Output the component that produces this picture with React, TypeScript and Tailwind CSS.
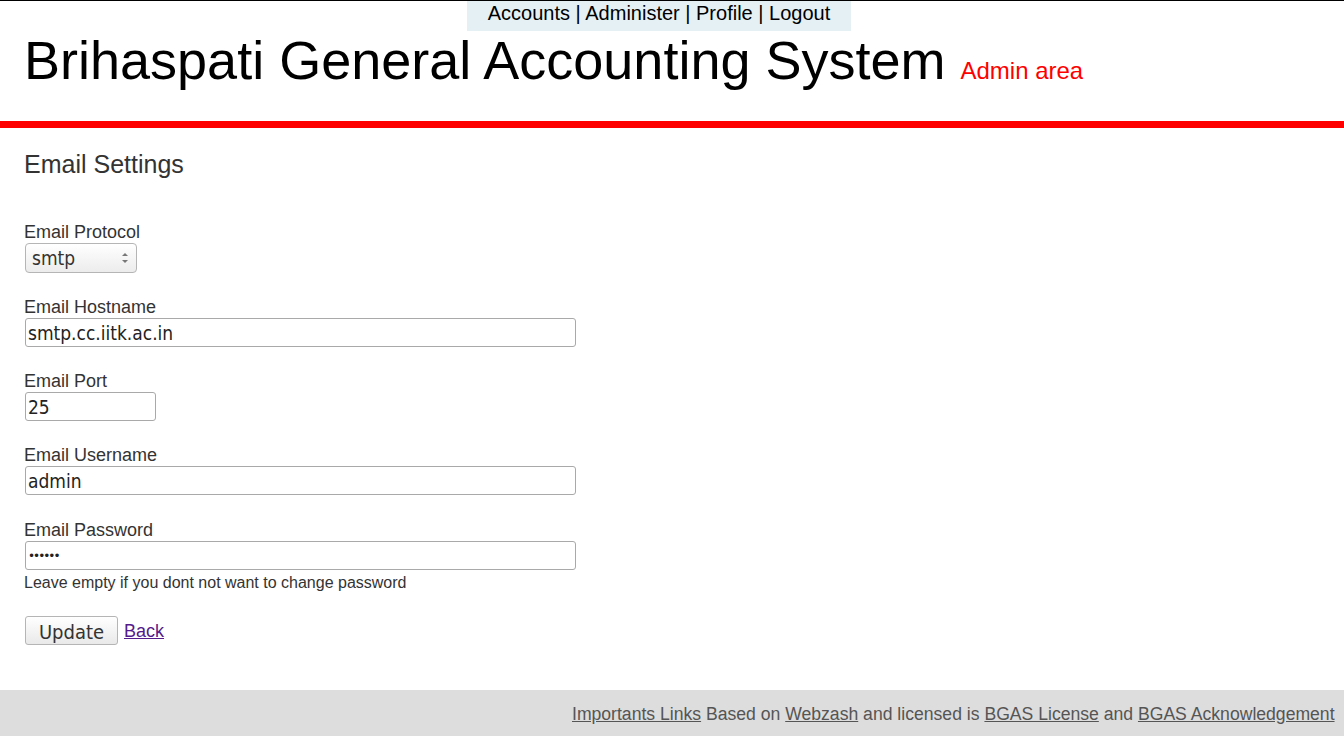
import React, { useState } from "react";

const fieldClass =
  "block h-[29px] rounded-[3px] border border-[#a9a9a9] bg-white px-[2px] text-[19px] text-[#222] outline-none font-['DejaVu_Sans_Condensed','DejaVu_Sans',sans-serif]";

function App() {
  const [settings, setSettings] = useState({
    protocol: "smtp",
    hostname: "smtp.cc.iitk.ac.in",
    port: "25",
    username: "admin",
    password: "secret",
  });

  const handleChange = (e: any) => {
    const { name, value } = e.target;
    setSettings({ ...settings, [name]: value });
  };

  return (
    <main className="min-h-[736px] flex flex-col bg-white font-['Liberation_Sans',Arial,sans-serif] text-[#333]">
      <div className="border-t border-black">
        <div className="flex justify-center">
          <div className="ml-[-26px] w-[384px] h-[30px] bg-[#e5f0f5] text-center text-[20px] leading-[24px] text-black">
            Accounts | Administer | Profile | Logout
          </div>
        </div>
        <div className="flex items-baseline px-6 h-[60px]">
          <h1 className="text-[54px] leading-[58px] text-black">Brihaspati General Accounting System</h1>
          <span className="ml-[15px] text-[24px] text-[#ff0000]">Admin area</span>
        </div>
      </div>

      <div className="mt-[30px] h-[7px] bg-[#ff0000]" />

      <div className="flex-1 px-6">
        <h2 className="mt-[21px] text-[25px] leading-[30px] text-[#333]">Email Settings</h2>

        <form className="mt-[42px] flex flex-col text-[18px]">
          <span className="flex flex-col">
            <label className="leading-[22px]">Email Protocol</label>
            <select
              name="protocol"
              value={settings.protocol}
              onChange={handleChange}
              className="ml-px h-[30px] w-[112px] rounded-[4px] border border-[#b5b5b5] bg-gradient-to-b from-white to-[#ececec] pl-[6px] text-[19px] text-[#333] outline-none appearance-none font-['DejaVu_Sans_Condensed','DejaVu_Sans',sans-serif] relative"
            >
              <option value="smtp">smtp</option>
              <option value="mail">mail</option>
              <option value="sendmail">sendmail</option>
            </select>
            <svg className="relative -mt-[22px] ml-[97px] mb-[8px]" width="8" height="14" viewBox="0 0 8 14">
              <path d="M1 5 L4 2 L7 5 Z" fill="#777" />
              <path d="M1 9 L4 12 L7 9 Z" fill="#777" />
            </svg>
          </span>

          <span className="mt-[23px] flex flex-col">
            <label className="leading-[22px]">Email Hostname</label>
            <input
              name="hostname"
              type="text"
              value={settings.hostname}
              onChange={handleChange}
              className={fieldClass + " ml-px w-[551px]"}
            />
          </span>

          <span className="mt-[23px] flex flex-col">
            <label className="leading-[22px]">Email Port</label>
            <input
              name="port"
              type="text"
              value={settings.port}
              onChange={handleChange}
              className={fieldClass + " ml-px w-[131px]"}
            />
          </span>

          <span className="mt-[23px] flex flex-col">
            <label className="leading-[22px]">Email Username</label>
            <input
              name="username"
              type="text"
              value={settings.username}
              onChange={handleChange}
              className={fieldClass + " ml-px w-[551px]"}
            />
          </span>

          <span className="mt-[24px] flex flex-col">
            <label className="leading-[22px]">Email Password</label>
            <input
              name="password"
              type="password"
              value={settings.password}
              onChange={handleChange}
              className="ml-px block h-[29px] w-[551px] rounded-[3px] border border-[#a9a9a9] bg-white px-[2px] text-[12px] tracking-[-2px] text-[#222] outline-none font-['DejaVu_Sans',sans-serif]"
            />
            <p className="mt-[2px] text-[16px] leading-[22px]">Leave empty if you dont not want to change password</p>
          </span>

          <div className="mt-[21px] flex items-center gap-[6px]">
            <button
              type="button"
              className="ml-px h-[29px] w-[93px] rounded-[3px] border border-[#b5b5b5] bg-gradient-to-b from-white to-[#e9e9e9] text-[20px] text-[#333] font-['DejaVu_Sans_Condensed','DejaVu_Sans',sans-serif]"
            >
              Update
            </button>
            <a href="#" className="mt-[3px] text-[18px] text-[#551a8b] underline">Back</a>
          </div>
        </form>
      </div>

      <footer className="mt-auto h-[46px] overflow-hidden whitespace-nowrap bg-[#dddddd] pl-[572px] text-[17.6px] leading-[48px] text-[#555]">
        <a href="#" className="underline">Importants Links</a> Based on <a href="#" className="underline">Webzash</a> and licensed is{" "}
        <a href="#" className="underline">BGAS License</a> and <a href="#" className="underline">BGAS Acknowledgement</a>
      </footer>
    </main>
  );
}

export default App;
